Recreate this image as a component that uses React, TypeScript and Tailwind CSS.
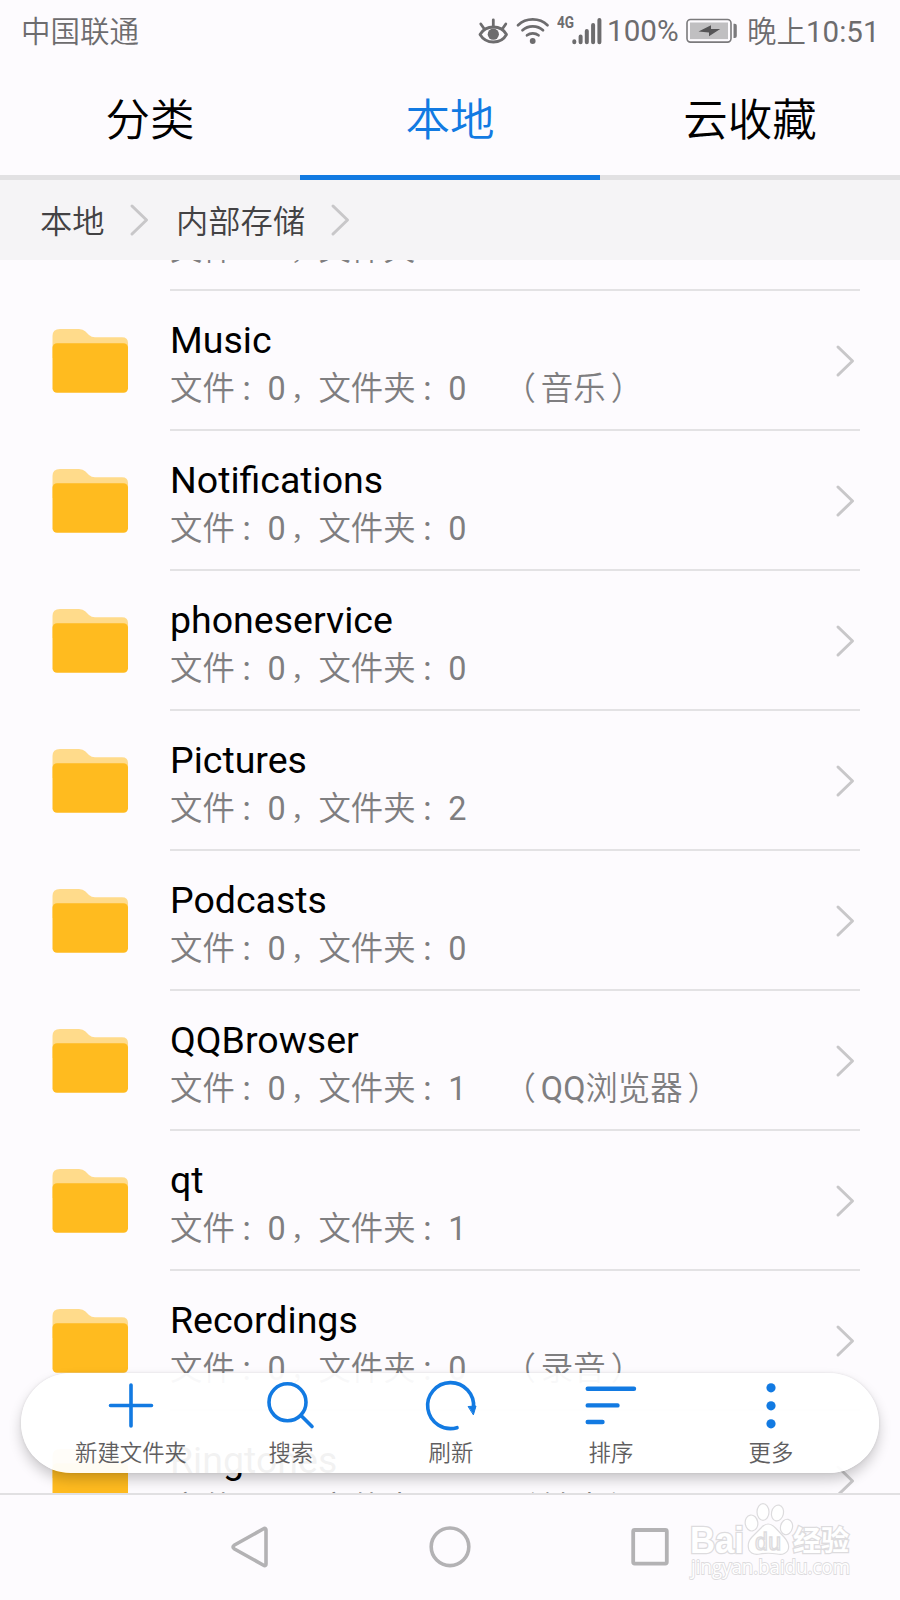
import type { ReactNode } from "react";

type Folder = {
  name: string;
  files: number;
  folders: number;
  alias?: ReactNode;
};

const folders: Folder[] = [
  { name: "Movies", files: 0, folders: 0 },
  { name: "Music", files: 0, folders: 0, alias: "音乐" },
  { name: "Notifications", files: 0, folders: 0 },
  { name: "phoneservice", files: 0, folders: 0 },
  { name: "Pictures", files: 0, folders: 2 },
  { name: "Podcasts", files: 0, folders: 0 },
  { name: "QQBrowser", files: 0, folders: 1, alias: <><span className="font-normal">QQ</span>浏览器</> },
  { name: "qt", files: 0, folders: 1 },
  { name: "Recordings", files: 0, folders: 0, alias: "录音" },
  { name: "Ringtones", files: 0, folders: 0, alias: "铃声" },
];

function StatusBar() {
  return (
    <div className="flex h-[62px] items-center pl-[21px] text-[#6d6c6e]">
      <span className="w-[456px] pt-[3px] text-[29.5px] leading-none font-[350]">中国联通</span>

      <svg className="h-[30px] w-8 shrink-0" viewBox="0 0 32 30" fill="none" stroke="currentColor" strokeLinecap="round">
        <path d="M3 18.5C9 8.5 24 8.5 29.5 18.5C24 28.5 9 28.5 3 18.5Z" strokeWidth="2.8" strokeLinejoin="round" />
        <circle cx="16.3" cy="18.2" r="5.6" fill="currentColor" stroke="none" />
        <path d="M16.3 3.8V10M3.8 8L6.8 12.2M28.8 8L25.8 12.2" strokeWidth="2.8" />
      </svg>

      <svg className="ml-[6px] h-[30px] w-[35px] shrink-0" viewBox="0 0 35 30" fill="none" stroke="currentColor" strokeWidth="2.7" strokeLinecap="round">
        <path d="M3 9.3C11 1.5 24.5 1.5 32.5 9.3" />
        <path d="M7.5 14.3C13 9 22.5 9 28 14.3" />
        <path d="M12 19.3C15.3 16.6 20.2 16.6 23.5 19.3" />
        <circle cx="17.7" cy="25" r="2.9" fill="currentColor" stroke="none" />
      </svg>

      <span className="ml-[7px] h-[30px] w-[14px] origin-left scale-x-80 font-[Roboto] text-[17px] leading-[13px] font-bold">4G</span>

      <svg className="h-[30px] w-[31px] shrink-0" viewBox="0 0 31 30" stroke="currentColor" strokeWidth="4" strokeLinecap="round">
        <path d="M3.3 25.2V26.2M9.6 20.5V26.2M15.8 15V26.2M22.1 9V26.2M28.4 4V26.2" />
      </svg>

      <span className="ml-[5px] w-[72px] pt-[2px] text-[29.6px] leading-none">100%</span>

      <svg className="ml-[7px] h-[30px] w-[53px] shrink-0" viewBox="0 0 53 30" fill="none">
        <rect x="1" y="3.5" width="44" height="22.6" rx="3.5" stroke="#7b7a7c" strokeWidth="1.6" />
        <rect x="4" y="6.5" width="38" height="16.6" fill="#c0bfc1" />
        <path d="M47.5 7.7h1.3q2 0 2 2v10.3q0 2-2 2h-1.3z" fill="#7b7a7c" />
        <path d="M12.5 15.5L25 9.3V13H34.2L23 20.2V16.5Z" fill="#555456" />
      </svg>

      <span className="ml-[8px] pt-[3px] text-[29.5px] leading-none font-[350] whitespace-nowrap">
        晚上<span className="font-normal">10:51</span>
      </span>
    </div>
  );
}

function Tabs() {
  return (
    <div className="flex h-[118px] text-[44.5px] leading-none font-[350]">
      <div className="flex flex-1 justify-center border-b-[5px] border-[#e2e1e3] pt-[37px] text-black">分类</div>
      <div className="flex flex-1 justify-center border-b-[5px] border-[#127ae2] pt-[37px] text-[#127ae2]">本地</div>
      <div className="flex flex-1 justify-center border-b-[5px] border-[#e2e1e3] pt-[37px] text-black">云收藏</div>
    </div>
  );
}

function Chevron({ className }: { className?: string }) {
  return (
    <svg
      className={`h-[34px] w-[21px] shrink-0 ${className ?? ""}`}
      viewBox="0 0 21 34"
      fill="none"
      stroke="#c8c7c9"
      strokeWidth="3"
      strokeLinecap="round"
      strokeLinejoin="round"
    >
      <path d="M3 3L17.5 17L3 31" />
    </svg>
  );
}

function Breadcrumb() {
  return (
    <div className="flex h-20 items-center bg-[#f5f4f6] pl-10 text-[32.3px] leading-none font-[350] text-[#434244]">
      <span className="w-[89px] pt-[4px]">本地</span>
      <Chevron />
      <span className="ml-[26px] w-[154px] pt-[4px]">内部存储</span>
      <Chevron />
    </div>
  );
}

function FolderIcon() {
  return (
    <svg className="h-[66px] w-[77px] shrink-0" viewBox="0 0 77 66" fill="none">
      <path d="M.5 8Q.5 1 8 1H27Q31 1 33.5 3.5L37 7Q39.5 9.2 43 9.2H70Q76 9.2 76 15V30H.5Z" fill="#ffdb8b" />
      <rect x=".5" y="15.3" width="75.5" height="49.5" rx="4.5" fill="#ffbb1f" />
    </svg>
  );
}

// Full-width mark set slightly right of centre in a one-character cell
function Mark({ children }: { children: string }) {
  return <span className="w-[32.7px] pt-[2px] pl-[5px] text-[27.5px]">{children}</span>;
}

function FolderRow({ folder }: { folder: Folder }) {
  return (
    <div className="flex h-[140px] shrink-0 pl-[52px]">
      <div className="pt-[37px]">
        <FolderIcon />
      </div>
      <div className="ml-[41px] flex w-[690px] justify-between border-b-2 border-[#e3e2e4]">
        <div>
          <div className="mt-[26px] h-[47px] text-[37.5px] leading-[46px] text-black">{folder.name}</div>
          <div className="flex h-[50px] text-[32.4px] leading-[50px] font-[350] text-[#7f7e80]">
            <span>文件</span>
            <Mark>：</Mark>
            <span className="font-normal">{folder.files}</span>
            <Mark>，</Mark>
            <span>文件夹</span>
            <Mark>：</Mark>
            <span className="font-normal">{folder.folders}</span>
            {folder.alias && (
              <>
                <span className="ml-[37px]">（</span>
                <span className="ml-[5px]">{folder.alias}</span>
                <span className="ml-[5px]">）</span>
              </>
            )}
          </div>
        </div>
        <Chevron className="mt-[53px] mr-[4px]" />
      </div>
    </div>
  );
}

function ToolItem({ label, children }: { label: string; children: ReactNode }) {
  return (
    <div className="flex w-40 flex-col items-center pt-[4px]">
      <svg
        className="h-14 w-14"
        viewBox="0 0 56 56"
        fill="none"
        stroke="#127ae2"
        strokeWidth="3.6"
        strokeLinecap="round"
      >
        {children}
      </svg>
      <span className="mt-[8px] text-[22.4px] leading-[24px] font-[350] whitespace-nowrap text-[#5f5e60]">{label}</span>
    </div>
  );
}

function Toolbar() {
  return (
    <div className="absolute top-[1373px] left-[21px] flex h-[99.5px] w-[858px] rounded-full bg-white/95 pl-[30px] shadow-[0_7px_13px_rgba(0,0,0,0.2),0_0_3px_rgba(0,0,0,0.1)]">
      <ToolItem label="新建文件夹">
        <path d="M28 8V49M7.5 28.5H48.5" />
      </ToolItem>
      <ToolItem label="搜索">
        <circle cx="24.5" cy="25.3" r="18.5" />
        <path d="M38 38.5L49 49.5" />
      </ToolItem>
      <ToolItem label="刷新">
        <path d="M34 50.7A23 23 0 1 1 50.5 31" />
        <path d="M45.5 29.5L53 29L50.5 37.5Z" fill="#127ae2" strokeWidth="1" strokeLinejoin="round" />
      </ToolItem>
      <ToolItem label="排序">
        <path d="M4.7 11.7H51M4.7 28.4H34.5M4.7 45H19.5" strokeWidth="4.4" />
      </ToolItem>
      <ToolItem label="更多">
        <g fill="#127ae2" stroke="none">
          <circle cx="28" cy="10.8" r="4.6" />
          <circle cx="28" cy="28.8" r="4.6" />
          <circle cx="28" cy="46.8" r="4.6" />
        </g>
      </ToolItem>
    </div>
  );
}

function NavBar() {
  return (
    <div className="flex h-[107px] items-center justify-center gap-[152px] border-t-2 border-[#e1e0e2]">
      <svg className="size-12" viewBox="0 0 48 48" fill="none" stroke="#b3b2b4" strokeWidth="3.6" strokeLinejoin="round">
        <path d="M8.5 21L38 4.5Q40 4 40 6V40Q40 42 38 41.5L8.5 25Q5.5 23 8.5 21Z" />
      </svg>
      <svg className="size-12" viewBox="0 0 48 48" fill="none" stroke="#b3b2b4" strokeWidth="3.6">
        <circle cx="24" cy="22.8" r="18.8" />
      </svg>
      <svg className="size-12" viewBox="0 0 48 48" fill="none" stroke="#b3b2b4" strokeWidth="3.8">
        <rect x="7.2" y="6" width="33.6" height="33.6" rx="1.5" />
      </svg>
    </div>
  );
}

function Watermark() {
  return (
    <svg className="absolute top-[1495px] left-[680px] h-[95px] w-[180px]" viewBox="0 0 180 95" fill="#fff" stroke="#dddcde">
      <g fontFamily="'Liberation Sans', sans-serif" fontWeight="bold" paintOrder="stroke" strokeWidth="2.6">
        <text x="10" y="58" fontSize="36" textLength="54" lengthAdjust="spacingAndGlyphs">Bai</text>
        <text x="113" y="56" fontSize="28" fontFamily="'Noto Sans CJK SC', sans-serif" textLength="56">经验</text>
      </g>
      <g strokeWidth="1.2">
        <ellipse cx="71.5" cy="28" rx="6.3" ry="8" transform="rotate(-8 71.5 28)" />
        <ellipse cx="83" cy="17" rx="6" ry="8.3" />
        <ellipse cx="97.5" cy="18" rx="6" ry="8" transform="rotate(12 97.5 18)" />
        <ellipse cx="106.5" cy="32" rx="6" ry="7.8" transform="rotate(12 106.5 32)" />
        <path d="M81 33Q88 25 95.5 33L104 42Q111 50 107.5 56Q104 60.5 97 59Q88 57.5 80 59Q72 60.5 69 55Q66.5 48 72 42Z" />
      </g>
      <text x="75" y="55" fontSize="23" fontFamily="'Liberation Sans', sans-serif" fill="#fff" strokeWidth="1.4" textLength="26">du</text>
      <text x="11" y="79" fontSize="20" fontFamily="'Open Sans', sans-serif" paintOrder="stroke" strokeWidth="1.8" textLength="159" lengthAdjust="spacingAndGlyphs">
        jingyan.baidu.com
      </text>
    </svg>
  );
}

export default function App() {
  return (
    <div className="relative flex h-[1600px] w-[900px] flex-col overflow-hidden bg-[#fdfbfe] font-[Roboto,'Noto_Sans_CJK_SC',sans-serif]">
      <StatusBar />
      <Tabs />
      <Breadcrumb />
      <div className="min-h-0 flex-1 overflow-hidden">
        {/* scrolled part way through the first row */}
        <div className="-mt-[109px] flex flex-col">
          {folders.map((folder) => (
            <FolderRow key={folder.name} folder={folder} />
          ))}
        </div>
      </div>
      <NavBar />
      <Toolbar />
      <Watermark />
    </div>
  );
}
